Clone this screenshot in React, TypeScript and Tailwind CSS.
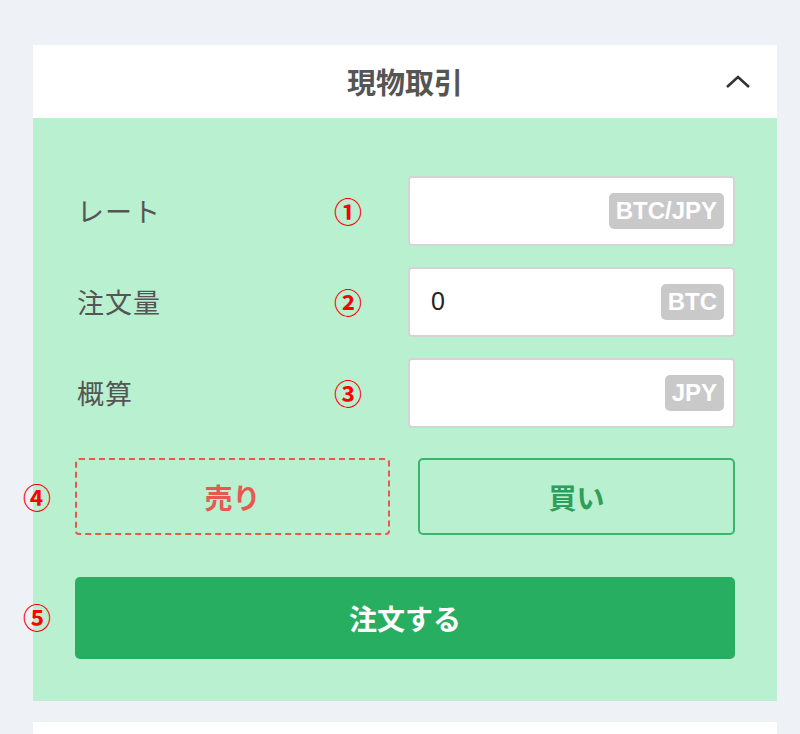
import React from 'react';

const jp = 'font-["Noto_Sans_CJK_JP","Noto_Sans",sans-serif]';

interface FieldProps {
    label: string;
    mark: string;
    unit: string;
    value?: string;
}

function Field({ label, mark, unit, value }: FieldProps) {
    return (
        <div className="flex items-center">
            <div className="w-[243px] pl-[2px] text-[27px] tracking-[1px] text-[#555]">{label}</div>
            <div className="w-[60px] text-center text-[28px] font-bold leading-none text-[#ff0000]">{mark}</div>
            <div className="ml-[30px] flex h-[70px] w-[327px] items-center rounded-[4px] border-2 border-[#d4d4d4] bg-white pl-[21px] pr-[9px]">
                <span className='flex-1 font-["Liberation_Sans",sans-serif] text-[25px] text-[#222]'>{value}</span>
                <span className='flex h-[36px] items-center rounded-[5px] bg-[#c9c9c9] px-[7px] font-["Liberation_Sans",sans-serif] text-[24px] font-bold text-white'>
                    {unit}
                </span>
            </div>
        </div>
    );
}

export default function App() {
    return (
        <div className={`min-h-[734px] bg-[#eef1f6] pt-[45px] ${jp}`}>
            <div className="ml-[33px] w-[744px]">
                {/* header */}
                <div className="relative flex h-[73px] items-center justify-center bg-white">
                    <h1 className="text-[29px] font-bold text-[#555]">現物取引</h1>
                    <svg className="absolute right-[26px] top-[29px]" width="26" height="16" viewBox="0 0 26 16" fill="none">
                        <path d="M2 13 L13 3 L24 13" stroke="#333" strokeWidth="2.6" />
                    </svg>
                </div>

                {/* body */}
                <div className="bg-[#b8f0d0] px-[42px] pb-[42px] pt-[58px]">
                    <div className="flex flex-col gap-[21px]">
                        <Field label="レート" mark="①" unit="BTC/JPY" />
                        <Field label="注文量" mark="②" unit="BTC" value="0" />
                        <Field label="概算" mark="③" unit="JPY" />
                    </div>

                    <div className="relative mt-[30px] flex gap-[28px]">
                        <span className="absolute left-[-52px] top-[25px] text-[28px] font-bold leading-none text-[#ff0000]">④</span>
                        <button className="flex h-[77px] w-[315px] items-center justify-center rounded-[4px] border-2 border-dashed border-[#e8584f] text-[28px] font-bold text-[#e8584f]">
                            売り
                        </button>
                        <button className="flex h-[77px] flex-1 items-center justify-center rounded-[5px] border-2 border-[#3bb56b] text-[28px] font-bold text-[#2e9e5b]">
                            買い
                        </button>
                    </div>

                    <div className="relative mt-[42px]">
                        <span className="absolute left-[-52px] top-[26px] text-[28px] font-bold leading-none text-[#ff0000]">⑤</span>
                        <button className="flex h-[82px] w-full items-center justify-center rounded-[5px] bg-[#27ae60] text-[28px] font-bold text-white">
                            注文する
                        </button>
                    </div>
                </div>

                <div className="mt-[21px] h-[40px] bg-white" />
            </div>
        </div>
    );
}
